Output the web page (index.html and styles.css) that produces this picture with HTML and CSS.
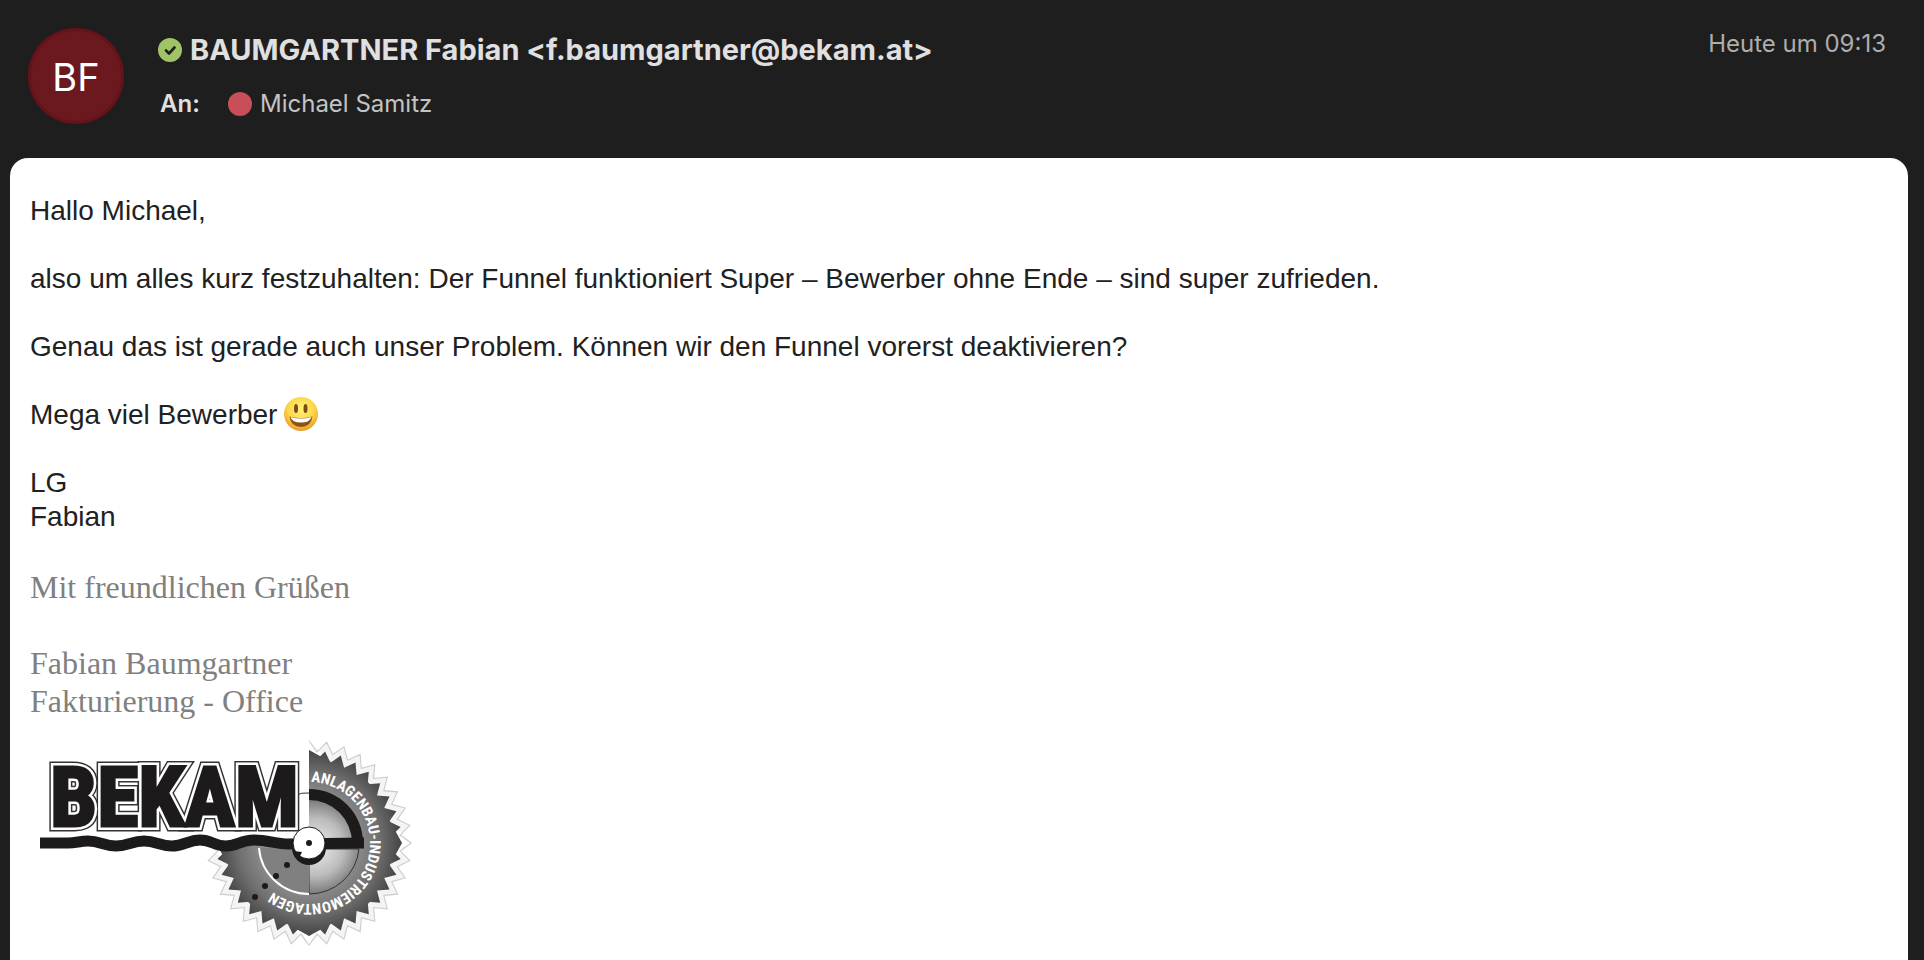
FILE: index.html
```html
<!DOCTYPE html>
<html lang="de">
<head>
  <meta charset="UTF-8">
  <meta name="viewport" content="width=device-width, initial-scale=1.0">
  <title>Nachricht</title>
  <link rel="stylesheet" href="styles.css">
</head>
<body>
  <header class="mail-header">
    <div class="avatar">BF</div>
    <div class="people">
      <h1 class="sender">
        <svg class="status" viewBox="0 0 24 24" aria-hidden="true">
          <circle cx="12" cy="12" r="12" fill="#9fc465"/>
          <path d="M8 12.500l3 3 5.500-6" fill="none" stroke="#1e1e1e" stroke-width="2.600" stroke-linecap="round" stroke-linejoin="round"/>
        </svg>
        BAUMGARTNER Fabian &lt;f.baumgartner@bekam.at&gt;
      </h1>
      <div class="recipient">
        <span class="to-label">An:</span>
        <span class="dot"></span>
        <span>Michael Samitz</span>
      </div>
    </div>
    <time class="date">Heute um 09:13</time>
  </header>

  <main class="message">
    <p>Hallo Michael,</p>
    <p>also um alles kurz festzuhalten: Der Funnel funktioniert Super – Bewerber ohne Ende – sind super zufrieden.</p>
    <p>Genau das ist gerade auch unser Problem. Können wir den Funnel vorerst deaktivieren?</p>
    <p class="with-emoji">Mega viel Bewerber
      <svg class="emoji" viewBox="0 0 36 36" role="img" aria-label="lachendes Gesicht">
        <defs>
          <radialGradient id="face" cx="50%" cy="35%" r="65%">
            <stop offset="0" stop-color="#fff27a"/>
            <stop offset=".6" stop-color="#fdd646"/>
            <stop offset="1" stop-color="#e99a2c"/>
          </radialGradient>
        </defs>
        <circle cx="18" cy="17" r="17" fill="url(#face)"/>
        <ellipse cx="13" cy="11.500" rx="2" ry="4.500" fill="#7a4a12"/>
        <ellipse cx="22.500" cy="11.500" rx="2" ry="4.500" fill="#7a4a12"/>
        <path d="M6.500 19.500Q18 23 29.500 19.500Q28 30 18 30T6.500 19.500Z" fill="#8a5214"/>
        <path d="M7.500 20Q18 23 28.500 20Q27 25.500 18 25.500T7.500 20Z" fill="#fff"/>
      </svg>
    </p>
    <p>LG<br>Fabian</p>

    <div class="signature">
      <p>Mit freundlichen Grüßen</p>
      <p>Fabian Baumgartner<br>Fakturierung - Office</p>
    </div>

    <svg class="logo" viewBox="10 0 400 240" role="img" aria-label="BEKAM Anlagenbau-Industriemontagen">
      <defs>
        <radialGradient id="steel" gradientUnits="userSpaceOnUse" cx="0" cy="0" r="93">
          <stop offset=".5" stop-color="#8e8e8e"/>
          <stop offset=".75" stop-color="#707070"/>
          <stop offset="1" stop-color="#444"/>
        </radialGradient>
        <radialGradient id="shine" gradientUnits="userSpaceOnUse" cx="6" cy="4" r="48">
          <stop offset="0" stop-color="#f0f0f0"/>
          <stop offset=".6" stop-color="#bcbcbc"/>
          <stop offset="1" stop-color="#777"/>
        </radialGradient>
        <path id="teeth" d="M93 0L82.700 7.200 91.600 16.100 80.200 21.500 87.400 31.800 75.200 35.100 80.500 46.500 68 47.600 71.200 59.800 58.700 58.700 59.800 71.200 47.600 68 46.500 80.500 35.100 75.200 31.800 87.400 21.500 80.200 16.100 91.600 7.200 82.700 0 93"/>
        <g id="quarter">
          <use href="#teeth"/>
          <path d="M0 0H93L60 60 0 93Z"/>
        </g>
        <path id="ring" d="M2 -61A61 61 0 1 1 -61 0"/>
        <text id="word" x="30" y="106">BEKAM</text>
      </defs>

      <g transform="translate(289 123)">
        <!-- pale teeth behind the blade -->
        <g class="teeth-shadow">
          <use href="#teeth" transform="rotate(-90) scale(1.100)"/>
          <use href="#teeth" transform="scale(1.100)"/>
          <use href="#teeth" transform="rotate(90) scale(1.100)"/>
        </g>
        <!-- saw blade, three quarters -->
        <g fill="url(#steel)">
          <use href="#quarter" transform="rotate(-90)"/>
          <use href="#quarter"/>
          <use href="#quarter" transform="rotate(90)"/>
        </g>
        <path d="M0 -54A54 54 0 0 1 54 0V5H0Z" fill="#1c1a1b"/>
        <path d="M0 -43A43 43 0 0 1 43 0V-4H0Z" fill="url(#shine)"/>
        <path d="M0 6H50A50 50 0 0 1 0 51Z" fill="url(#shine)" stroke="#333"/>
        <path d="M0 51A50 50 0 0 1 -50 5H0Z" fill="#808080"/>
        <path d="M0 51A50 50 0 0 1 -50 5" fill="none" stroke="#fff" stroke-width="2"/>
        <g fill="#1c1a1b">
          <circle cx="-22" cy="22" r="3"/>
          <circle cx="-33" cy="33" r="3"/>
          <circle cx="-44" cy="43" r="3"/>
          <circle cx="-54" cy="54" r="3"/>
        </g>
        <text class="ring-text"><textPath href="#ring">ANLAGENBAU-INDUSTRIEMONTAGEN</textPath></text>
      </g>

      <path d="M20 123H48C56 123 60 121 68 121C80 121 84 126 96 126S112 121 124 121 140 126 152 126 168 120 180 120 194 126 206 126 220 120 234 120 256 124 268 124L344 123" fill="none" stroke="#1c1a1b" stroke-width="11"/>
      <path d="M277 108L274 76Q282 72 289 73" fill="none" stroke="#333"/>
      <use href="#word" class="word-outline"/>
      <use href="#word" class="word-gap"/>
      <use href="#word" class="word-fill"/>

      <circle cx="289" cy="128" r="17" fill="#1c1a1b"/>
      <circle cx="289" cy="123" r="16" fill="#fff" stroke="#1c1a1b"/>
      <circle cx="289" cy="123" r="3" fill="#1c1a1b"/>
      <path d="M273 131l6 7 3-6z" fill="#1c1a1b"/>
    </svg>
  </main>
</body>
</html>
```
FILE: styles.css
```css
* {
  box-sizing: border-box;
}
body {
  margin: 0;
  min-height: 100vh;
  display: flex;
  flex-direction: column;
  background-color: #1e1e1e;
  color: #e0e0e0;
  font-family: Inter, "Liberation Sans", sans-serif;
}
.mail-header {
  display: flex;
  align-items: flex-start;
  padding: 28px 38px 34px 28px;
}
.avatar {
  width: 96px;
  height: 96px;
  border-radius: 50%;
  background-color: #6b191f;
  border: 3px solid #641319;
  color: #fff;
  font-size: 38px;
  line-height: 92px;
  text-align: center;
}
.people {
  flex: 1;
  margin-left: 34px;
}
.sender {
  display: flex;
  align-items: center;
  gap: 8px;
  margin: 0;
  font-size: 29px;
  line-height: 44px;
  font-weight: 700;
}
.status {
  width: 24px;
  height: 24px;
}
.recipient {
  display: flex;
  align-items: center;
  margin-top: 14px;
  padding-left: 2px;
  font-size: 24px;
  line-height: 36px;
  color: #c4c4c4;
}
.to-label {
  width: 68px;
  font-weight: 600;
  color: #e0e0e0;
}
.dot {
  width: 24px;
  height: 24px;
  margin-right: 8px;
  border-radius: 50%;
  background-color: #c84f57;
}
.date {
  font-size: 24px;
  line-height: 32px;
  color: #adadad;
}
.message {
  flex: 1;
  margin: 0 16px 0 10px;
  padding: 36px 20px 0;
  border-radius: 18px 18px 0 0;
  background-color: #fff;
  color: #212121;
  font-family: "Liberation Sans", sans-serif;
  font-size: 28px;
  line-height: 34px;
}
.message p {
  margin: 0 0 34px;
}
.with-emoji {
  display: flex;
  align-items: center;
  gap: 6px;
  height: 34px;
}
.emoji {
  width: 36px;
  height: 36px;
}
.message .signature {
  color: #808080;
  font-family: "Liberation Serif", serif;
  font-size: 32px;
  line-height: 38px;
}
.signature p:first-child {
  margin-bottom: 38px;
}
.signature p:last-child {
  margin-bottom: 0;
}
.logo {
  display: block;
  width: 400px;
  height: 240px;
}
.teeth-shadow {
  fill: #f4f4f4;
  stroke: #ccc;
}
#word {
  font-family: "Roboto Condensed", Roboto, sans-serif;
  font-size: 84px;
  font-weight: 700;
}
.word-outline {
  fill: #333;
  stroke: #333;
  stroke-width: 11px;
}
.word-gap {
  fill: #fff;
  stroke: #fff;
  stroke-width: 8px;
}
.word-fill {
  fill: #1c1a1b;
  stroke: #1c1a1b;
  stroke-width: 3px;
}
.ring-text {
  fill: #fff;
  font-family: "Roboto Condensed", Roboto, sans-serif;
  font-size: 15px;
  font-weight: 700;
}
```
